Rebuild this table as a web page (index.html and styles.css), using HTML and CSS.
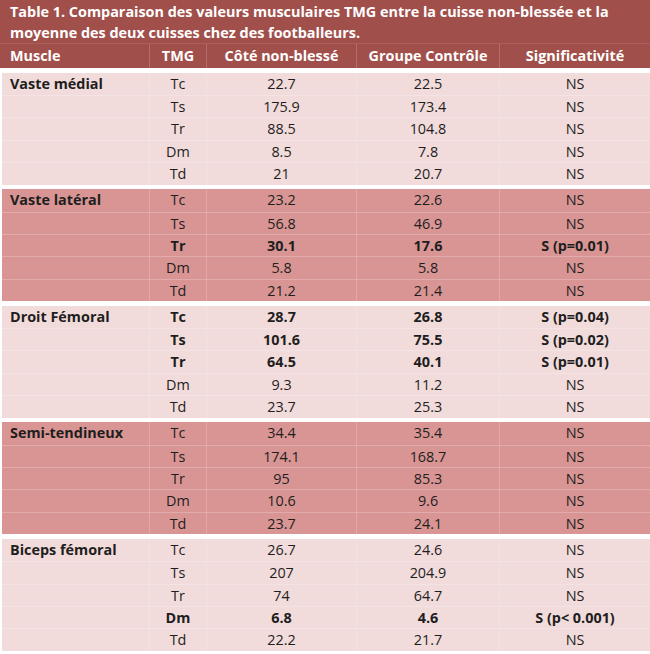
FILE: index.html
```html
<!DOCTYPE html>
<html lang="fr">
<head>
<meta charset="utf-8">
<title>Table 1</title>
<link rel="stylesheet" href="styles.css">
</head>
<body>
<div class="table">
  <div class="title">Table 1. Comparaison des valeurs musculaires TMG entre la cuisse non-blessée et la moyenne des deux cuisses chez des footballeurs.</div>
  <div class="row head">
    <div class="c first">Muscle</div><div class="c">TMG</div><div class="c">Côté non-blessé</div><div class="c">Groupe Contrôle</div><div class="c">Significativité</div>
  </div>

  <div class="group light">
    <div class="row"><div class="c first b">Vaste médial</div><div class="c">Tc</div><div class="c">22.7</div><div class="c">22.5</div><div class="c">NS</div></div>
    <div class="row"><div class="c first"></div><div class="c">Ts</div><div class="c">175.9</div><div class="c">173.4</div><div class="c">NS</div></div>
    <div class="row"><div class="c first"></div><div class="c">Tr</div><div class="c">88.5</div><div class="c">104.8</div><div class="c">NS</div></div>
    <div class="row"><div class="c first"></div><div class="c">Dm</div><div class="c">8.5</div><div class="c">7.8</div><div class="c">NS</div></div>
    <div class="row"><div class="c first"></div><div class="c">Td</div><div class="c">21</div><div class="c">20.7</div><div class="c">NS</div></div>
  </div>

  <div class="group dark">
    <div class="row"><div class="c first b">Vaste latéral</div><div class="c">Tc</div><div class="c">23.2</div><div class="c">22.6</div><div class="c">NS</div></div>
    <div class="row"><div class="c first"></div><div class="c">Ts</div><div class="c">56.8</div><div class="c">46.9</div><div class="c">NS</div></div>
    <div class="row b"><div class="c first"></div><div class="c">Tr</div><div class="c">30.1</div><div class="c">17.6</div><div class="c">S (p=0.01)</div></div>
    <div class="row"><div class="c first"></div><div class="c">Dm</div><div class="c">5.8</div><div class="c">5.8</div><div class="c">NS</div></div>
    <div class="row"><div class="c first"></div><div class="c">Td</div><div class="c">21.2</div><div class="c">21.4</div><div class="c">NS</div></div>
  </div>

  <div class="group light">
    <div class="row b"><div class="c first">Droit Fémoral</div><div class="c">Tc</div><div class="c">28.7</div><div class="c">26.8</div><div class="c">S (p=0.04)</div></div>
    <div class="row b"><div class="c first"></div><div class="c">Ts</div><div class="c">101.6</div><div class="c">75.5</div><div class="c">S (p=0.02)</div></div>
    <div class="row b"><div class="c first"></div><div class="c">Tr</div><div class="c">64.5</div><div class="c">40.1</div><div class="c">S (p=0.01)</div></div>
    <div class="row"><div class="c first"></div><div class="c">Dm</div><div class="c">9.3</div><div class="c">11.2</div><div class="c">NS</div></div>
    <div class="row"><div class="c first"></div><div class="c">Td</div><div class="c">23.7</div><div class="c">25.3</div><div class="c">NS</div></div>
  </div>

  <div class="group dark">
    <div class="row"><div class="c first b">Semi-tendineux</div><div class="c">Tc</div><div class="c">34.4</div><div class="c">35.4</div><div class="c">NS</div></div>
    <div class="row"><div class="c first"></div><div class="c">Ts</div><div class="c">174.1</div><div class="c">168.7</div><div class="c">NS</div></div>
    <div class="row"><div class="c first"></div><div class="c">Tr</div><div class="c">95</div><div class="c">85.3</div><div class="c">NS</div></div>
    <div class="row"><div class="c first"></div><div class="c">Dm</div><div class="c">10.6</div><div class="c">9.6</div><div class="c">NS</div></div>
    <div class="row"><div class="c first"></div><div class="c">Td</div><div class="c">23.7</div><div class="c">24.1</div><div class="c">NS</div></div>
  </div>

  <div class="group light">
    <div class="row"><div class="c first b">Biceps fémoral</div><div class="c">Tc</div><div class="c">26.7</div><div class="c">24.6</div><div class="c">NS</div></div>
    <div class="row"><div class="c first"></div><div class="c">Ts</div><div class="c">207</div><div class="c">204.9</div><div class="c">NS</div></div>
    <div class="row"><div class="c first"></div><div class="c">Tr</div><div class="c">74</div><div class="c">64.7</div><div class="c">NS</div></div>
    <div class="row b"><div class="c first"></div><div class="c">Dm</div><div class="c">6.8</div><div class="c">4.6</div><div class="c">S (p&lt; 0.001)</div></div>
    <div class="row"><div class="c first"></div><div class="c">Td</div><div class="c">22.2</div><div class="c">21.7</div><div class="c">NS</div></div>
  </div>
</div>
</body>
</html>
```

FILE: styles.css
```css
html, body {
  margin: 0;
  padding: 0;
  background: #ffffff;
}
body {
  font-family: "Open Sans", "Noto Sans", sans-serif;
  font-size: 14.4px;
  color: #1e1e1e;
}
.table {
  width: 650px;
  display: flex;
  flex-direction: column;
  gap: 4.6px;
  background: #ffffff;
}
.title {
  background: #a14f4a;
  color: #ffffff;
  font-weight: 700;
  line-height: 21px;
  padding: 1px 10px 0 10px;
  margin-bottom: -4.6px;
}
.row {
  display: grid;
  grid-template-columns: 150px 57px 150px 143px 150px;
  height: 22.4px;
  line-height: 22.4px;
}
.row.head {
  background: #a14f4a;
  color: #ffffff;
  font-weight: 700;
  height: 24px;
  line-height: 24px;
  border-top: 1px solid #a9605b;
}
.c {
  text-align: center;
  white-space: nowrap;
  border-right: 1px solid rgba(255, 255, 255, 0.18);
}
.c:last-child {
  border-right: none;
}
.c.first {
  text-align: left;
  padding-left: 10px;
}
.b .c, .c.b {
  font-weight: 700;
}
.group {
  margin-left: 2px;
}
.group .row {
  border-top: 1px solid rgba(255, 255, 255, 0.22);
  box-sizing: border-box;
  grid-template-columns: 148px 57px 150px 143px 150px;
}
.group .row:first-child {
  border-top: none;
}
.group .row .c.first {
  padding-left: 8px;
}
.light {
  background: #f2dcdb;
}
.dark {
  background: #d99594;
}
```
